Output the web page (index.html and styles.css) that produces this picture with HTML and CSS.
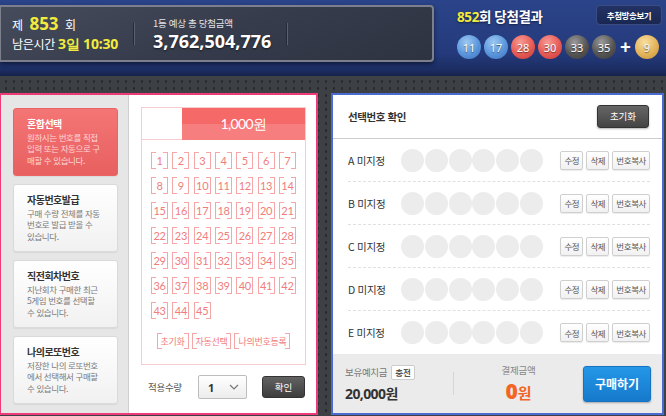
FILE: index.html
```html
<!DOCTYPE html>
<html lang="ko">
<head>
    <meta charset="UTF-8">
    <title>로또 구매</title>
    <link rel="stylesheet" href="styles.css">
</head>
<body>

<!-- 상단 회차 정보 -->
<div class="top">
    <div class="info-box">
        <div class="remain">
            <div class="round-line">제 <b class="yellow big">853</b> 회</div>
            <div class="time-line">남은시간 <b class="yellow mid">3일 10:30</b></div>
        </div>
        <div class="vline"></div>
        <div class="jackpot">
            <div class="jackpot-label">1등 예상 총 당첨금액</div>
            <div class="jackpot-amount">3,762,504,776</div>
        </div>
        <div class="vline"></div>
    </div>

    <div class="result">
        <div class="result-head">
            <div class="result-title"><span class="yellow">852</span>회 당첨결과</div>
            <button class="live-btn">추첨방송보기</button>
        </div>
        <div class="balls">
            <span class="ball blue">11</span>
            <span class="ball blue">17</span>
            <span class="ball red">28</span>
            <span class="ball red">30</span>
            <span class="ball gray">33</span>
            <span class="ball gray">35</span>
            <span class="plus">+</span>
            <span class="ball gold">9</span>
        </div>
    </div>
</div>

<div class="main">
    <!-- 번호 선택 -->
    <div class="picker">
        <div class="modes">
            <div class="mode active">
                <div class="mode-title">혼합선택</div>
                <div class="mode-desc">원하시는 번호를 직접<br>입력 또는 자동으로 구<br>매할 수 있습니다.</div>
            </div>
            <div class="mode">
                <div class="mode-title">자동번호발급</div>
                <div class="mode-desc">구매 수량 전체를 자동<br>번호로 발급 받을 수<br>있습니다.</div>
            </div>
            <div class="mode">
                <div class="mode-title">직전회차번호</div>
                <div class="mode-desc">지난회차 구매한 최근<br>5게임 번호를 선택할<br>수 있습니다.</div>
            </div>
            <div class="mode">
                <div class="mode-title">나의로또번호</div>
                <div class="mode-desc">저장한 나의 로또번호<br>에서 선택해서 구매할<br>수 있습니다.</div>
            </div>
        </div>

        <div class="board">
            <div class="ticket">
                <div class="price">
                    <div class="price-blank"></div>
                    <div class="price-tag">1,000원</div>
                </div>
                <div class="numbers" id="numbers"></div>
                <div class="ticket-btns">
                    <span class="tbtn">초기화</span>
                    <span class="tbtn">자동선택</span>
                    <span class="tbtn">나의번호등록</span>
                </div>
            </div>
            <div class="amount">
                <span class="amount-label">적용수량</span>
                <div class="select">
                    <span>1</span>
                    <svg width="10" height="6" viewBox="0 0 10 6"><path d="M1 1l4 4 4-4" fill="none" stroke="#777" stroke-width="1.2"/></svg>
                </div>
                <button class="ok-btn">확인</button>
            </div>
        </div>
    </div>

    <!-- 선택번호 확인 -->
    <div class="confirm">
        <div class="confirm-head">
            <h3>선택번호 확인</h3>
            <button class="dark-btn">초기화</button>
        </div>
        <div class="lines">
            <div class="line">
                <span class="line-label">A 미지정</span>
                <span class="slots"><i></i><i></i><i></i><i></i><i></i><i></i></span>
                <span class="line-btns"><button>수정</button><button>삭제</button><button>번호복사</button></span>
            </div>
            <div class="line">
                <span class="line-label">B 미지정</span>
                <span class="slots"><i></i><i></i><i></i><i></i><i></i><i></i></span>
                <span class="line-btns"><button>수정</button><button>삭제</button><button>번호복사</button></span>
            </div>
            <div class="line">
                <span class="line-label">C 미지정</span>
                <span class="slots"><i></i><i></i><i></i><i></i><i></i><i></i></span>
                <span class="line-btns"><button>수정</button><button>삭제</button><button>번호복사</button></span>
            </div>
            <div class="line">
                <span class="line-label">D 미지정</span>
                <span class="slots"><i></i><i></i><i></i><i></i><i></i><i></i></span>
                <span class="line-btns"><button>수정</button><button>삭제</button><button>번호복사</button></span>
            </div>
            <div class="line">
                <span class="line-label">E 미지정</span>
                <span class="slots"><i></i><i></i><i></i><i></i><i></i><i></i></span>
                <span class="line-btns"><button>수정</button><button>삭제</button><button>번호복사</button></span>
            </div>
        </div>
        <div class="pay-bar">
            <div class="balance">
                <div class="balance-head">보유예치금 <button class="charge">충전</button></div>
                <div class="balance-amount">20,000원</div>
            </div>
            <div class="vsep"></div>
            <div class="total">
                <div class="total-label">결제금액</div>
                <div class="total-amount"><b>0</b>원</div>
            </div>
            <button class="buy-btn">구매하기</button>
        </div>
    </div>
</div>

<script>
    // 1 ~ 45 번호판 만들기
    var box = document.getElementById('numbers');
    for (var n = 1; n <= 45; n++) {
        var cell = document.createElement('span');
        cell.className = 'cell';
        cell.textContent = n;
        box.appendChild(cell);
    }
</script>

</body>
</html>
```

FILE: styles.css
```css
* {
    box-sizing: border-box;
}
body {
    margin: 0;
    width: 666px;
    height: 416px;
    overflow: hidden;
    font-family: "Noto Sans CJK KR", "Noto Sans", sans-serif;
    background-color: #3d4045;
    background-image: radial-gradient(circle, #26282c 1px, transparent 1.4px);
    background-size: 8px 7px;
    background-position: 2px 1px;
}
button {
    font-family: inherit;
    cursor: pointer;
}
.yellow {
    color: #f2ea3c;
}

/* top */
.top {
    height: 76px;
    display: flex;
    background: linear-gradient(#2b4489, #243a7c 70%, #1c2d62 92%, #15224a);
}
.info-box {
    width: 434px;
    height: 57px;
    margin-top: 5px;
    display: flex;
    align-items: center;
    padding-left: 11px;
    border: 2px solid #7b808c;
    border-left-width: 1px;
    border-radius: 0 4px 4px 0;
    background: linear-gradient(160deg, #464c5c, #363c4c 50%, #2e3341);
    box-shadow: 0 2px 4px rgba(0, 0, 0, 0.5);
    color: #fff;
}
.remain {
    width: 121px;
}
.round-line {
    font-size: 12px;
    line-height: 18px;
}
.round-line .big {
    font-family: "Noto Sans", sans-serif;
    font-size: 17px;
    margin: 0 3px 0 3px;
}
.time-line {
    font-size: 12px;
    line-height: 19px;
    letter-spacing: -0.3px;
}
.time-line .mid {
    font-family: "Noto Sans", sans-serif;
    font-size: 14px;
    letter-spacing: -0.2px;
}
.vline {
    width: 2px;
    height: 22px;
    background: #24283a;
    border-right: 1px solid #5a6070;
}
.jackpot {
    width: 151px;
    padding-left: 18px;
}
.jackpot-label {
    font-size: 9.5px;
    color: #e0e2e8;
    letter-spacing: -0.3px;
}
.jackpot-amount {
    font-family: "Noto Sans", sans-serif;
    font-weight: bold;
    font-size: 18px;
    line-height: 22px;
    text-shadow: 0 1px 2px rgba(0, 0, 0, 0.6);
}
.result {
    margin-left: 23px;
    width: 205px;
}
.result-head {
    display: flex;
    justify-content: space-between;
    align-items: flex-start;
    margin-top: 5px;
}
.result-title {
    font-size: 13.5px;
    font-weight: bold;
    color: #fff;
    margin-top: 1px;
    letter-spacing: -0.4px;
    text-shadow: 0 1px 2px rgba(0, 0, 0, 0.5);
}
.result-title .yellow {
    font-family: "Noto Sans", sans-serif;
}
.live-btn {
    width: 66px;
    height: 20px;
    padding: 0;
    font-size: 8.5px;
    font-weight: bold;
    letter-spacing: -0.4px;
    color: #fff;
    background: linear-gradient(#223264, #1a2752);
    border: 1px solid #3b4c82;
    border-radius: 4px;
}
.balls {
    display: flex;
    align-items: center;
    margin-top: 9px;
}
.ball {
    width: 24px;
    height: 24px;
    margin-right: 3px;
    border-radius: 50%;
    display: flex;
    align-items: center;
    justify-content: center;
    font-family: "Noto Sans", sans-serif;
    font-size: 11px;
    color: #fff;
    text-shadow: 0 1px 1px rgba(0, 0, 0, 0.5);
}
.ball.blue {
    background: radial-gradient(circle at 40% 30%, #9cc8f2, #5a95dc 55%, #3e73bc);
}
.ball.red {
    background: radial-gradient(circle at 40% 30%, #f79a92, #e65a55 55%, #c43a38);
}
.ball.gray {
    background: radial-gradient(circle at 40% 30%, #9a9a9a, #555 55%, #383838);
}
.ball.gold {
    background: radial-gradient(circle at 40% 30%, #f8dea0, #e2b35a 55%, #c28f38);
}
.plus {
    color: #fff;
    font-family: "Noto Sans", sans-serif;
    font-weight: bold;
    font-size: 19px;
    line-height: 20px;
    margin: 0 4px 0 1px;
}

/* main */
.main {
    display: flex;
    padding-top: 17px;
}
.picker {
    width: 318px;
    height: 322px;
    display: flex;
    border: 2px solid #ef3a78;
    border-left-width: 1px;
    background: #fff;
}
.modes {
    width: 128px;
    padding: 13px 0 0 12px;
    background: #e6e6e6;
    border-right: 1px solid #cfcfcf;
}
.mode {
    width: 105px;
    height: 68px;
    margin-bottom: 8px;
    padding: 8px 0 0 13px;
    border: 1px solid #dadada;
    border-radius: 3px;
    background: linear-gradient(#fff, #f1f1f1);
    box-shadow: 0 1px 1px rgba(0, 0, 0, 0.06);
    white-space: nowrap;
}
.mode-title {
    font-size: 10px;
    font-weight: bold;
    line-height: 14px;
    letter-spacing: -0.5px;
    color: #333;
}
.mode-desc {
    margin-top: 1px;
    font-size: 8.5px;
    line-height: 11.4px;
    letter-spacing: -0.4px;
    color: #7a7a7a;
}
.mode.active {
    border-color: #ea6464;
    background: linear-gradient(#f47575, #e86060);
}
.mode.active .mode-title {
    color: #fff;
}
.mode.active .mode-desc {
    color: #ffd6d6;
}
.board {
    flex: 1;
    padding: 12px 10px 0 12px;
}
.ticket {
    height: 258px;
    border: 1px solid #f8cccc;
}
.price {
    display: flex;
    height: 32px;
}
.price-blank {
    width: 40px;
    border-bottom: 1px solid #f8cccc;
}
.price-tag {
    flex: 1;
    display: flex;
    align-items: center;
    justify-content: center;
    font-family: Lato, sans-serif;
    font-size: 14px;
    letter-spacing: -0.6px;
    color: #fff;
    background: linear-gradient(#f56969 50%, #f77e7e 50%);
}
.numbers {
    display: grid;
    grid-template-columns: repeat(7, 17px);
    grid-auto-rows: 17px;
    column-gap: 4.3px;
    row-gap: 8px;
    justify-content: center;
    padding-top: 12px;
}
.cell,
.tbtn {
    display: flex;
    align-items: center;
    justify-content: center;
    border-left: 1px solid #f5a7a7;
    border-right: 1px solid #f5a7a7;
    background:
        linear-gradient(#f5a7a7, #f5a7a7) left top / 4px 1px no-repeat,
        linear-gradient(#f5a7a7, #f5a7a7) right top / 4px 1px no-repeat,
        linear-gradient(#f5a7a7, #f5a7a7) left bottom / 4px 1px no-repeat,
        linear-gradient(#f5a7a7, #f5a7a7) right bottom / 4px 1px no-repeat;
    color: #f07c7c;
}
.cell {
    font-family: Lato, sans-serif;
    font-size: 11px;
    letter-spacing: -0.3px;
}
.ticket-btns {
    display: flex;
    justify-content: center;
    gap: 3px;
    margin-top: 14px;
}
.tbtn {
    height: 16px;
    padding: 0 3px;
    font-size: 9px;
    letter-spacing: -0.3px;
}
.amount {
    display: flex;
    align-items: center;
    margin-top: 10px;
    padding-left: 7px;
}
.amount-label {
    font-size: 9.5px;
    color: #555;
    letter-spacing: -0.3px;
    width: 50px;
}
.select {
    width: 49px;
    height: 24px;
    display: flex;
    align-items: center;
    justify-content: space-between;
    padding: 0 7px 0 9px;
    border: 1px solid #bdbdbd;
    border-radius: 2px;
    background: linear-gradient(#fff, #ececec);
    font-family: "Noto Sans", sans-serif;
    font-weight: bold;
    font-size: 11px;
    color: #333;
}
.ok-btn {
    width: 43px;
    height: 22px;
    margin-left: 15px;
    padding: 0;
    font-size: 9.5px;
    color: #fff;
    border: 1px solid #333;
    border-radius: 3px;
    background: linear-gradient(#626262, #3d3d3d);
}

/* confirm */
.confirm {
    width: 333px;
    height: 322px;
    margin-left: 13px;
    border: 2px solid #4a6bd0;
    background: #fff;
    display: flex;
    flex-direction: column;
}
.confirm-head {
    height: 44px;
    display: flex;
    align-items: center;
    justify-content: space-between;
    padding: 0 13px 1px 15px;
    border-bottom: 1px solid #cdcdcd;
}
.confirm-head h3 {
    margin: 0;
    font-size: 10.5px;
    letter-spacing: -0.4px;
    color: #333;
}
.dark-btn {
    width: 52px;
    height: 23px;
    padding: 0;
    font-size: 9.5px;
    color: #fff;
    border: 1px solid #333;
    border-radius: 3px;
    background: linear-gradient(#666, #444);
    box-shadow: 0 1px 2px rgba(0, 0, 0, 0.3);
}
.lines {
    flex: 1;
    padding: 0 12px 0 15px;
}
.line {
    height: 43px;
    display: flex;
    align-items: center;
    border-bottom: 1px dashed #e0e0e0;
}
.line:last-child {
    border-bottom: none;
}
.line-label {
    width: 53px;
    font-size: 10.5px;
    letter-spacing: -0.3px;
    color: #333;
}
.slots {
    display: flex;
    gap: 0.8px;
}
.slots i {
    width: 23px;
    height: 23px;
    border-radius: 50%;
    background: #ececec;
}
.line-btns {
    margin-left: auto;
    display: flex;
    gap: 3px;
}
.line-btns button {
    height: 19px;
    padding: 0 3px;
    min-width: 23px;
    font-size: 8.5px;
    letter-spacing: -0.4px;
    color: #555;
    border: 1px solid #cfcfcf;
    border-radius: 2px;
    background: linear-gradient(#fff, #f1f1f1);
    box-shadow: 0 1px 1px rgba(0, 0, 0, 0.08);
}
.pay-bar {
    height: 59px;
    display: flex;
    align-items: center;
    padding: 0 11px 0 12px;
    background: #ebebeb;
}
.balance {
    width: 108px;
}
.balance-head {
    font-size: 9.5px;
    color: #777;
    letter-spacing: -0.3px;
    display: flex;
    align-items: center;
}
.charge {
    height: 15px;
    margin-left: 4px;
    padding: 0 3px;
    font-size: 8.5px;
    font-weight: bold;
    color: #555;
    border: 1px solid #ccc;
    border-radius: 2px;
    background: #fff;
}
.balance-amount {
    margin-top: 3px;
    font-family: "Noto Sans", "Noto Sans CJK KR", sans-serif;
    font-weight: bold;
    font-size: 14px;
    letter-spacing: -0.6px;
    color: #333;
}
.vsep {
    width: 1px;
    height: 23px;
    background: #d6d6d6;
}
.total {
    flex: 1;
    text-align: center;
}
.total-label {
    font-size: 9.5px;
    line-height: 14px;
    color: #888;
    letter-spacing: -0.3px;
}
.total-amount {
    margin-top: 3px;
    color: #f36524;
    font-weight: bold;
    font-size: 15px;
    line-height: 22px;
}
.total-amount b {
    font-family: "Noto Sans", sans-serif;
    font-size: 21px;
    line-height: 22px;
}
.buy-btn {
    width: 68px;
    height: 36px;
    padding: 0;
    font-size: 12px;
    font-weight: bold;
    color: #fff;
    border: 1px solid #1574c2;
    border-radius: 3px;
    background: linear-gradient(#2497e6, #1679cc);
    box-shadow: 0 1px 2px rgba(0, 0, 0, 0.3);
}
```
